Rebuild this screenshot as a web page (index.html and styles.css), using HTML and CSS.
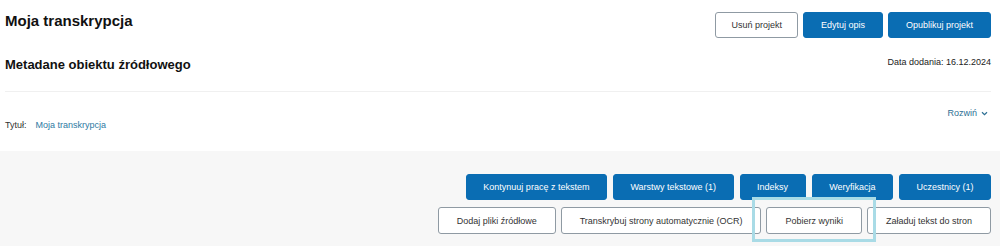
FILE: index.html
```html
<!DOCTYPE html>
<html lang="pl">
<head>
<meta charset="utf-8">
<title>Moja transkrypcja</title>
<link rel="stylesheet" href="styles.css">
</head>
<body>
<div class="page">
  <section class="top">
    <header class="header">
      <h1 class="title">Moja transkrypcja</h1>
      <div class="actions">
        <button class="btn btn-outline">Usuń projekt</button>
        <button class="btn btn-primary">Edytuj opis</button>
        <button class="btn btn-primary">Opublikuj projekt</button>
      </div>
    </header>
    <div class="meta-head">
      <h2 class="subtitle">Metadane obiektu źródłowego</h2>
      <span class="date">Data dodania: 16.12.2024</span>
    </div>
    <div class="divider"></div>
    <div class="expand-row">
      <a class="expand">Rozwiń
        <svg class="chev" width="7" height="5" viewBox="0 0 7 5"><path d="M1 1.2 L3.5 3.6 L6 1.2" fill="none" stroke="currentColor" stroke-width="1.2"/></svg>
      </a>
    </div>
    <div class="field">
      <span class="field-label">Tytuł:</span>
      <a class="field-value">Moja transkrypcja</a>
    </div>
  </section>
  <section class="tools">
    <div class="row row-1">
      <button class="btn btn-primary">Kontynuuj pracę z tekstem</button>
      <button class="btn btn-primary">Warstwy tekstowe (1)</button>
      <button class="btn btn-primary">Indeksy</button>
      <button class="btn btn-primary">Weryfikacja</button>
      <button class="btn btn-primary">Uczestnicy (1)</button>
    </div>
    <div class="row row-2">
      <button class="btn btn-outline">Dodaj pliki źródłowe</button>
      <button class="btn btn-outline">Transkrybuj strony automatycznie (OCR)</button>
      <button class="btn btn-outline btn-focus">Pobierz wyniki</button>
      <button class="btn btn-outline">Załaduj tekst do stron</button>
    </div>
  </section>
</div>
</body>
</html>
```
FILE: styles.css
```css
* { box-sizing: border-box; }
html, body {
  margin: 0;
  padding: 0;
  background: #ffffff;
  font-family: "Liberation Sans", Arial, sans-serif;
  color: #222;
}
.page {
  width: 1000px;
  height: 246px;
  overflow: hidden;
}
.top {
  padding: 12px 9px 0 5px;
  height: 151px;
}
.header {
  display: flex;
  justify-content: space-between;
  align-items: flex-start;
}
.title {
  margin: 0;
  font-size: 15px;
  line-height: 18px;
  font-weight: bold;
  color: #111;
}
.actions {
  display: flex;
  gap: 5px;
}
.btn {
  font-family: "Liberation Sans", Arial, sans-serif;
  font-size: 9px;
  height: 26px;
  padding: 0 17px;
  border-radius: 3px;
  cursor: pointer;
  white-space: nowrap;
}
.btn-primary {
  background: #0a6db3;
  color: #ffffff;
  border: 1px solid #0a6db3;
}
.btn-outline {
  background: #ffffff;
  color: #333;
  border: 1px solid #8f9aa3;
}
.actions .btn-outline { padding: 0 15px; }
.meta-head {
  display: flex;
  justify-content: space-between;
  align-items: flex-start;
  margin-top: 19px;
}
.subtitle {
  margin: 0;
  font-size: 13px;
  line-height: 16px;
  font-weight: bold;
  color: #111;
}
.date {
  font-size: 9px;
  line-height: 11px;
  color: #222;
}
.divider {
  margin-top: 18px;
  border-top: 1px solid #f0f0f0;
}
.expand-row {
  display: flex;
  justify-content: flex-end;
  margin-top: 16px;
  padding-right: 3px;
}
.expand {
  font-size: 9px;
  line-height: 11px;
  color: #2d6f94;
  display: flex;
  align-items: center;
  gap: 4px;
}
.chev { display: block; }
.field {
  display: flex;
  gap: 9px;
  font-size: 9px;
  line-height: 11px;
  margin-top: 1px;
}
.field-label { color: #333; }
.field-value { color: #2e7aa3; }
.tools {
  background: #f7f7f7;
  height: 95px;
  padding: 23px 9px 0 0;
  display: flex;
  flex-direction: column;
  align-items: flex-end;
  gap: 7px;
}
.row {
  display: flex;
  gap: 6px;
}
.row-1 .btn { padding: 0 16.5px; }
.row-2 { gap: 5px; }
.row-2 .btn { height: 27px; padding: 0 18px; }
.btn-focus { position: relative; }
.btn-focus::after {
  content: "";
  position: absolute;
  top: -11px;
  bottom: -9px;
  left: -15px;
  right: -15px;
  border: 3px solid #a9dbe6;
  pointer-events: none;
}
```
